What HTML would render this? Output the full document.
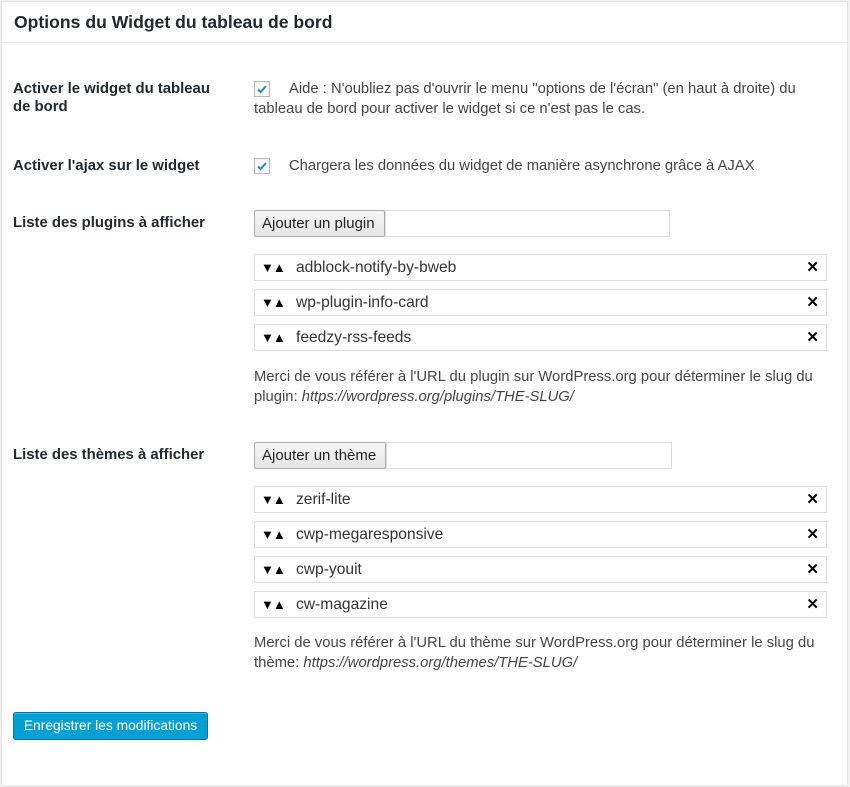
<!DOCTYPE html>
<html><head><meta charset="utf-8"><style>
*{box-sizing:border-box;margin:0;padding:0}
body{width:850px;height:787px;background:#f1f1f1;font-family:"Liberation Sans",sans-serif;color:#444;font-size:14.8px;position:relative;overflow:hidden}
.box{position:absolute;left:1px;top:1px;width:847px;height:785px;background:#fff;border:1px solid #e5e5e5}
.hdr{position:absolute;left:0;top:0;width:845px;height:41px;border-bottom:1px solid #eee}
h2{position:absolute;left:12px;top:10px;font-size:17.6px;font-weight:bold;color:#23282d;white-space:nowrap}
.lbl{position:absolute;left:13px;font-weight:bold;color:#23282d;font-size:14.9px;line-height:18px;white-space:nowrap}
.cb{position:absolute;left:254px;width:16px;height:16px;border:1px solid #b4b9be;background:#fff;box-shadow:inset 0 1px 2px rgba(0,0,0,.1)}
.txt{position:absolute;left:254px;line-height:20px;color:#444;white-space:nowrap}
.btn{position:absolute;left:254px;height:27px;border:1px solid #aaa;border-radius:2px;background:linear-gradient(#f6f6f6,#e4e4e4);color:#222;font-size:15px;line-height:25px;padding:0 7px;white-space:nowrap}
.inp{position:absolute;height:27px;border:1px solid #ddd;background:#fff}
.item{position:absolute;left:254px;width:573px;height:27px;border:1px solid #ddd;background:#fff;font-size:15.6px;line-height:25px;color:#333}
.item .ar{position:absolute;left:6px;top:0;font-size:13px;color:#000;letter-spacing:-1px}
.item .n{position:absolute;left:41px}
.item .x{position:absolute;right:7px;top:0;font-size:15px;font-weight:bold;color:#000}
.save{position:absolute;left:13px;top:712px;width:195px;height:28px;background:#00a0d2;border:1px solid #0073aa;border-radius:3px;color:#fff;font-size:13.8px;line-height:26px;text-align:center;box-shadow:inset 0 1px 0 rgba(120,200,230,.5)}
</style></head><body>
<div class="box">
<div class="hdr"><h2>Options du Widget du tableau de bord</h2></div>
</div>
<div class="lbl" style="top:80px">Activer le widget du tableau<br>de bord</div>
<div class="cb" style="top:81px"><svg width="14" height="14" viewBox="0 0 14 14" style="position:absolute;left:0;top:0"><path d="M3 7.5l2.6 2.6L11 4" stroke="#1e8cbe" stroke-width="2" fill="none"/></svg></div>
<div class="txt" style="top:79px;left:289px">Aide : N'oubliez pas d'ouvrir le menu "options de l'écran" (en haut à droite) du</div>
<div class="txt" style="top:99px">tableau de bord pour activer le widget si ce n'est pas le cas.</div>

<div class="lbl" style="top:157px">Activer l'ajax sur le widget</div>
<div class="cb" style="top:158px"><svg width="14" height="14" viewBox="0 0 14 14" style="position:absolute;left:0;top:0"><path d="M3 7.5l2.6 2.6L11 4" stroke="#1e8cbe" stroke-width="2" fill="none"/></svg></div>
<div class="txt" style="top:156px;left:289px">Chargera les données du widget de manière asynchrone grâce à AJAX</div>

<div class="lbl" style="top:214px">Liste des plugins à afficher</div>
<div class="btn" style="top:210px;width:131px">Ajouter un plugin</div>
<div class="inp" style="top:210px;left:385px;width:285px"></div>
<div class="item" style="top:254px"><span class="ar">▼▲</span><span class="n">adblock-notify-by-bweb</span><span class="x">✕</span></div>
<div class="item" style="top:289px"><span class="ar">▼▲</span><span class="n">wp-plugin-info-card</span><span class="x">✕</span></div>
<div class="item" style="top:324px"><span class="ar">▼▲</span><span class="n">feedzy-rss-feeds</span><span class="x">✕</span></div>
<div class="txt" style="top:367px">Merci de vous référer à l'URL du plugin sur WordPress.org pour déterminer le slug du<br>plugin: <i>https://wordpress.org/plugins/THE-SLUG/</i></div>

<div class="lbl" style="top:446px">Liste des thèmes à afficher</div>
<div class="btn" style="top:442px;width:132px">Ajouter un thème</div>
<div class="inp" style="top:442px;left:386px;width:286px"></div>
<div class="item" style="top:486px"><span class="ar">▼▲</span><span class="n">zerif-lite</span><span class="x">✕</span></div>
<div class="item" style="top:521px"><span class="ar">▼▲</span><span class="n">cwp-megaresponsive</span><span class="x">✕</span></div>
<div class="item" style="top:556px"><span class="ar">▼▲</span><span class="n">cwp-youit</span><span class="x">✕</span></div>
<div class="item" style="top:591px"><span class="ar">▼▲</span><span class="n">cw-magazine</span><span class="x">✕</span></div>
<div class="txt" style="top:633px">Merci de vous référer à l'URL du thème sur WordPress.org pour déterminer le slug du<br>thème: <i>https://wordpress.org/themes/THE-SLUG/</i></div>

<div class="save">Enregistrer les modifications</div>
</body></html>
